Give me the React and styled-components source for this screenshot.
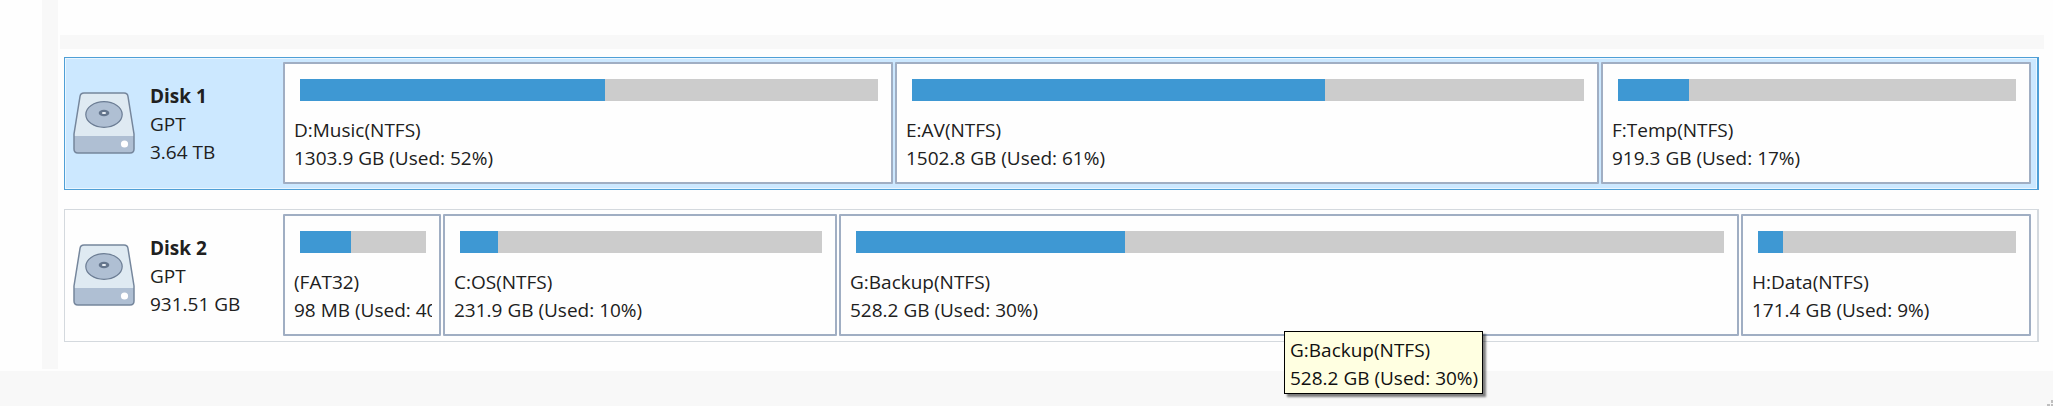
import React from 'react'
import styled, { createGlobalStyle } from 'styled-components'

const GlobalStyle = createGlobalStyle`
  * {
    box-sizing: border-box;
  }

  body {
    margin: 0;
    background-color: #fefefe;
    color: #202020;
    font-family: "Open Sans", "Noto Sans", sans-serif;
    font-size: 19px;
    line-height: 28px;
  }
`

const Page = styled.div`
  display: flex;
  flex-direction: column;
  min-height: 100vh;
`

const Body = styled.div`
  display: flex;
  gap: 2px;
  margin-bottom: 2px;
`

const Sidebar = styled.div`
  flex: none;
  width: 58px;
  border-right: 16px solid #f8f8f8;
`

const Content = styled.main`
  flex: 1;
  min-width: 0;
  padding: 35px 9px 27px 0;
`

const Splitter = styled.div`
  height: 14px;
  background-color: #f8f8f8;
`

const DiskList = styled.div`
  display: flex;
  flex-direction: column;
  gap: 19px;
  padding: 8px 5px 0 4px;
`

const DiskRow = styled.section`
  display: flex;
  padding: 4px 6px 5px 8px;
  border: 1px solid ${(props) => (props.$selected ? '#4f9fd6' : '#d4d9de')};
  border-right-width: 2px;
  background-color: ${(props) => (props.$selected ? '#cce8ff' : '#fefefe')};
  box-shadow: inset 0 0 0 1px ${(props) => (props.$selected ? '#eaf6ff' : '#fefefe')};
`

const DiskInfo = styled.div`
  display: flex;
  align-items: center;
  gap: 15px;
  flex: none;
  width: 210px;
`

const DiskText = styled.div`
  padding-top: 2px;
`

const DiskName = styled.h2`
  margin: 0;
  font-size: 19px;
  font-weight: 700;
`

const Line = styled.div`
  white-space: nowrap;
  overflow: hidden;
`

const Partitions = styled.div`
  display: grid;
  grid-template-columns: ${(props) => props.$sizes.map((size) => `minmax(0, ${size}fr)`).join(' ')};
  flex: 1;
  gap: 2px;
  min-width: 0;
`

const PartitionBox = styled.div`
  position: relative;
  height: 122px;
  padding: 15px 7px 0 9px;
  border: 2px solid #a0aec3;
  border-radius: 1px;
  background-color: #fefefe;
`

const Bar = styled.div`
  height: 22px;
  margin: 0 6px 15px;
  background-color: #cccccc;
`

const BarFill = styled.div`
  height: 100%;
  background-color: #3e98d3;
`

const Tooltip = styled.div`
  position: absolute;
  z-index: 1;
  top: 115px;
  left: 443px;
  padding: 4px 4px 1px 5px;
  border: 1px solid #000000;
  background-color: #ffffe1;
  color: #101010;
  box-shadow: 3px 3px 2px rgba(0, 0, 0, 0.5);
  white-space: nowrap;
`

const StatusBar = styled.footer`
  display: flex;
  flex: 1;
  align-items: flex-end;
  justify-content: flex-end;
  background-color: #f8f8f8;
`

const disks = [
  {
    name: 'Disk 1',
    style: 'GPT',
    capacity: '3.64 TB',
    selected: true,
    partitions: [
      { name: 'D:Music(NTFS)', usage: '1303.9 GB (Used: 52%)', size: 610, used: 52.8 },
      { name: 'E:AV(NTFS)', usage: '1502.8 GB (Used: 61%)', size: 704, used: 61.5 },
      { name: 'F:Temp(NTFS)', usage: '919.3 GB (Used: 17%)', size: 430, used: 17.8 },
    ],
  },
  {
    name: 'Disk 2',
    style: 'GPT',
    capacity: '931.51 GB',
    selected: false,
    partitions: [
      { name: '(FAT32)', usage: '98 MB (Used: 40%)', size: 158, used: 40.5 },
      { name: 'C:OS(NTFS)', usage: '231.9 GB (Used: 10%)', size: 394, used: 10.5 },
      { name: 'G:Backup(NTFS)', usage: '528.2 GB (Used: 30%)', size: 900, used: 31, hovered: true },
      { name: 'H:Data(NTFS)', usage: '171.4 GB (Used: 9%)', size: 290, used: 9.7 },
    ],
  },
]

const DiskIcon = () => (
  <svg width="62" height="62" viewBox="0 0 62 62" aria-hidden="true">
    <path d="M11 1H51Q54.500 1 55 4.500L61 44H1L7 4.500Q7.500 1 11 1Z" fill="#dfeaf2" />
    <path d="M1 44H61V57Q61 61 57 61H5Q1 61 1 57Z" fill="#afbfd3" />
    <path
      d="M11 1H51Q54.500 1 55 4.500L61 42V57Q61 61 57 61H5Q1 61 1 57V42L7 4.500Q7.500 1 11 1Z"
      fill="none"
      stroke="#75869c"
      strokeWidth="1.500"
    />
    <ellipse cx="31" cy="22.500" rx="18.200" ry="12.800" fill="#afbfd3" stroke="#6c7d94" strokeWidth="1.200" />
    <ellipse cx="31" cy="21" rx="5.300" ry="3.200" fill="#64758c" />
    <ellipse cx="31" cy="21" rx="2.200" ry="1" fill="#f2f7fb" />
    <circle cx="51.500" cy="52" r="3.600" fill="#ffffff" />
  </svg>
)

const ResizeGrip = () => (
  <svg width="6" height="6" viewBox="0 0 6 6" fill="#bfbfbf" aria-hidden="true">
    <rect x="4" y="0" width="2" height="3" />
    <rect x="0" y="4" width="3" height="2" />
    <rect x="4" y="4" width="2" height="2" />
  </svg>
)

const Partition = ({ partition }) => (
  <PartitionBox>
    <Bar>
      <BarFill style={{ width: `${partition.used}%` }} />
    </Bar>
    <Line>{partition.name}</Line>
    <Line>{partition.usage}</Line>
    {partition.hovered && (
      <Tooltip role="tooltip">
        <div>{partition.name}</div>
        <div>{partition.usage}</div>
      </Tooltip>
    )}
  </PartitionBox>
)

const Disk = ({ disk }) => (
  <DiskRow $selected={disk.selected}>
    <DiskInfo>
      <DiskIcon />
      <DiskText>
        <DiskName>{disk.name}</DiskName>
        <Line>{disk.style}</Line>
        <Line>{disk.capacity}</Line>
      </DiskText>
    </DiskInfo>
    <Partitions $sizes={disk.partitions.map((partition) => partition.size)}>
      {disk.partitions.map((partition) => (
        <Partition key={partition.name} partition={partition} />
      ))}
    </Partitions>
  </DiskRow>
)

const App = () => (
  <Page>
    <GlobalStyle />
    <Body>
      <Sidebar />
      <Content>
        <Splitter />
        <DiskList>
          {disks.map((disk) => (
            <Disk key={disk.name} disk={disk} />
          ))}
        </DiskList>
      </Content>
    </Body>
    <StatusBar>
      <ResizeGrip />
    </StatusBar>
  </Page>
)

export default App
